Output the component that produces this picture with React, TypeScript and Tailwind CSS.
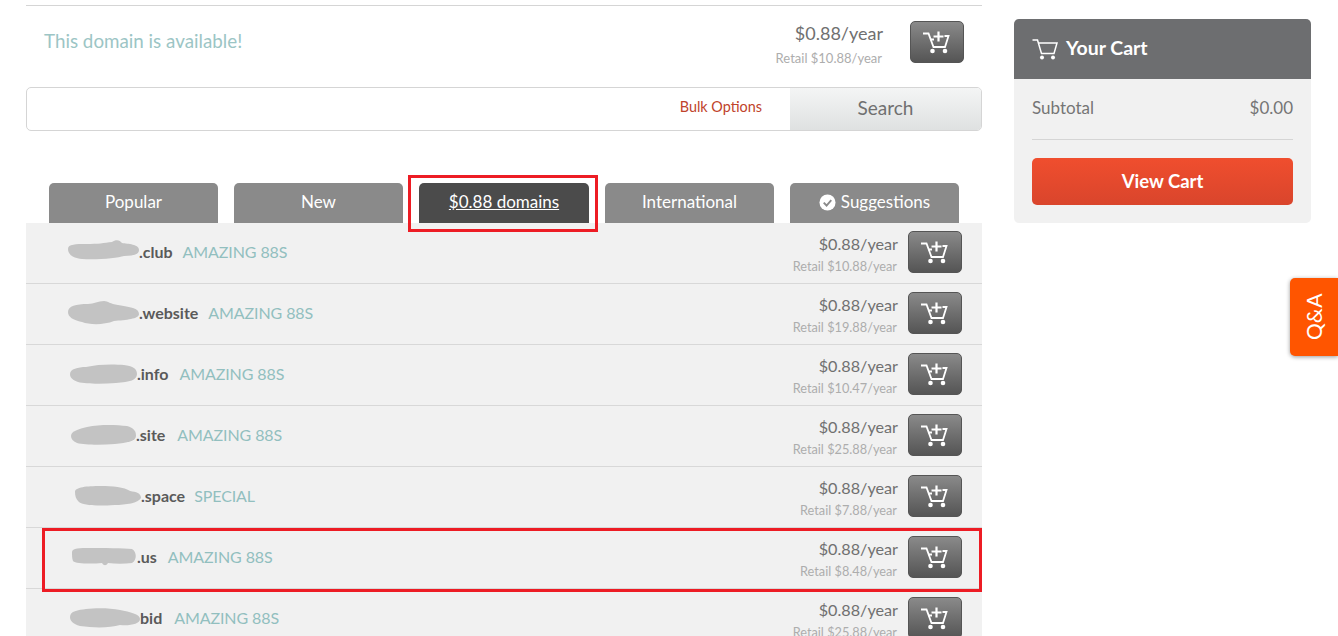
const font = "font-['Lato','Noto_Sans',sans-serif]";

function CartPlus() {
  return (
    <svg viewBox="0 0 54 42" className="w-[54px] h-[42px] block" fill="none" stroke="#fff">
      <path d="M13 12.5h5.5l5 13.5h11.5l3.5-11h-4" strokeWidth="1.8" />
      <path d="M20.5 18.5h3.5" strokeWidth="1.8" />
      <path d="M28.5 10.5v10M23.5 15.5h10" strokeWidth="2.2" />
      <circle cx="22.5" cy="30" r="2.3" fill="#fff" stroke="none" />
      <circle cx="35" cy="30" r="2.3" fill="#fff" stroke="none" />
    </svg>
  );
}

function AddButton() {
  return (
    <div className="w-[54px] h-[42px] shrink-0 rounded-[5px] border border-[#555] bg-gradient-to-b from-[#8a8a8a] to-[#555555] flex items-center justify-center overflow-hidden">
      <div className="shrink-0">
        <CartPlus />
      </div>
    </div>
  );
}

type Row = {
  tld: string;
  tag: string;
  retail: string;
  blobBox: string;
  view: string;
  blob: string;
  tagGap: string;
};

const rows: Row[] = [
  { tld: ".club", tag: "AMAZING 88S", retail: "Retail $10.88/year", blobBox: "ml-[42px] w-[71px] h-[20px] -mt-[3px]", view: "0 0 71 20", tagGap: "ml-[10px]", blob: "M0 9C0 4 8 4 18 4C30 4 36 3 44 2C48 -1 52 0 54 3C60 4 71 4 71 10C71 14 66 16 56 16C50 18 30 20 14 19C4 18 0 14 0 9Z" },
  { tld: ".website", tag: "AMAZING 88S", retail: "Retail $19.88/year", blobBox: "ml-[42px] w-[71px] h-[24px]", view: "0 0 71 24", tagGap: "ml-[10px]", blob: "M0 11C0 5 8 3 20 3C26 3 30 0 36 0C40 0 42 3 50 4C62 6 71 7 71 13C71 18 58 19 46 20C36 24 22 24 14 21C5 19 0 16 0 11Z" },
  { tld: ".info", tag: "AMAZING 88S", retail: "Retail $10.47/year", blobBox: "ml-[44px] w-[67px] h-[20px]", view: "0 0 67 20", tagGap: "ml-[11px]", blob: "M0 10C0 5 8 3 16 3C28 0 44 0 54 1C62 2 67 4 67 10C67 16 60 18 46 19C32 20 16 20 8 18C3 16 0 14 0 10Z" },
  { tld: ".site", tag: "AMAZING 88S", retail: "Retail $25.88/year", blobBox: "ml-[45px] w-[65px] h-[20px]", view: "0 0 65 20", tagGap: "ml-[12px]", blob: "M0 11C0 6 8 4 16 2C30 -1 46 0 56 1C63 3 65 6 65 11C65 16 56 18 44 19C30 20 14 20 6 18C2 16 0 14 0 11Z" },
  { tld: ".space", tag: "SPECIAL", retail: "Retail $7.88/year", blobBox: "ml-[49px] w-[66px] h-[20px]", view: "0 0 67 20", tagGap: "ml-[9px]", blob: "M0 6C0 1 12 0 26 0C38 0 50 1 56 5C62 6 67 7 67 12C64 17 52 19 40 19C26 20 10 20 4 16C1 13 0 10 0 6Z" },
  { tld: ".us", tag: "AMAZING 88S", retail: "Retail $8.48/year", blobBox: "ml-[46px] w-[65px] h-[18px]", view: "0 0 65 18", tagGap: "ml-[11px]", blob: "M0 4C0 0 8 0 18 0C30 0 52 0 60 1C65 4 65 12 60 15C52 16 44 16 36 15C34 18 32 18 30 15C20 16 4 16 1 13C0 10 0 8 0 4Z" },
  { tld: "bid", tag: "AMAZING 88S", retail: "Retail $25.88/year", blobBox: "ml-[44px] w-[70px] h-[20px]", view: "0 0 70 20", tagGap: "ml-[12px]", blob: "M0 9C0 3 8 2 16 1C26 0 40 0 50 2C60 4 70 6 70 11C70 16 60 18 50 17C40 20 24 20 10 18C3 16 0 13 0 9Z" },
];

function DomainRow({ row }: { row: Row }) {
  return (
    <div className="h-[61px] border-b border-[#d8d8d8] flex items-center pr-[20px] pb-[3px]">
      <svg viewBox={row.view} preserveAspectRatio="none" className={`${row.blobBox} shrink-0`}>
        <path d={row.blob} fill="#c3c3c3" />
      </svg>
      <span className="text-[16px] font-bold text-[#5a5a5a]">{row.tld}</span>
      <span className={`${row.tagGap} text-[16px] tracking-[-0.1px] text-[#92bfbf]`}>{row.tag}</span>
      <div className="ml-auto mr-[10px] text-right pt-[7px]">
        <div className="text-[16.2px] leading-[23px] text-[#707070]">$0.88/year</div>
        <div className="text-[12.75px] leading-[23px] pr-[1px] text-[#adadad]">{row.retail}</div>
      </div>
      <AddButton />
    </div>
  );
}

function Tab({ label, active, check }: { label: string; active?: boolean; check?: boolean }) {
  return (
    <div className={`h-[40px] rounded-t-[5px] pb-[2px] flex items-center justify-center gap-[5px] text-[17px] text-white ${active ? "w-[170px] bg-[#4b4b4b] underline" : "w-[169px] bg-[#8a8a8a]"}`}>
      {check && (
        <svg viewBox="0 0 18 18" className="w-[17px] h-[17px]">
          <circle cx="9" cy="9" r="8.5" fill="#fff" />
          <path d="M5 9.2l3 3 5-5.6" stroke="#8a8a8a" strokeWidth="2" fill="none" />
        </svg>
      )}
      {label}
    </div>
  );
}

export default function App() {
  return (
    <div className={`${font} relative h-[636px] w-[1338px] overflow-hidden bg-white flex`}>
      <div className="w-[956px] ml-[26px] pt-[5px] shrink-0">
        <div className="h-[82px] border-t border-[#d5d5d5] flex items-start pl-[18px] pr-[18px]">
          <span className="mt-[21px] text-[18.8px] leading-[28px] text-[#9cc5c5]">This domain is available!</span>
          <div className="ml-auto mr-[27px] mt-[14px] text-right">
            <div className="text-[18px] leading-[26px] text-[#707070]">$0.88/year</div>
            <div className="text-[13px] leading-[24px] pr-[1px] text-[#adadad]">Retail $10.88/year</div>
          </div>
          <div className="mt-[15px]">
            <AddButton />
          </div>
        </div>

        <div className="h-[44px] border border-[#d5d5d5] rounded-[5px] flex items-stretch overflow-hidden">
          <div className="flex-1 flex items-center justify-end pr-[28px] pb-[4px] text-[14.4px] text-[#c0432b]">Bulk Options</div>
          <div className="w-[191px] bg-gradient-to-b from-[#f4f5f5] to-[#dfe1e1] pb-[2px] flex items-center justify-center text-[19px] text-[#707070]">Search</div>
        </div>

        <div className="mt-[52px] pl-[23px] flex gap-[16px]">
          <Tab label="Popular" />
          <Tab label="New" />
          <Tab label="$0.88 domains" active />
          <Tab label="International" />
          <Tab label="Suggestions" check />
        </div>

        <div className="bg-[#f1f1f1]">
          {rows.map((r) => (
            <DomainRow key={r.tld} row={r} />
          ))}
        </div>
      </div>

      <div className="ml-[32px] mt-[19px] w-[297px] h-[204px] rounded-[5px] bg-[#f1f1f1] overflow-hidden shrink-0">
        <div className="h-[60px] bg-[#6d6e70] flex items-center pl-[18px] pb-[2px] gap-[7px] text-[19.5px] font-bold text-white">
          <svg viewBox="0 0 27 22" className="w-[27px] h-[22px] mt-[2px]" fill="none" stroke="#fff">
            <path d="M0.5 2h5l4 13.5h12.5l3-10.5H6.5" strokeWidth="1.5" />
            <circle cx="10" cy="19.5" r="2" fill="#fff" stroke="none" />
            <circle cx="21" cy="19.5" r="2" fill="#fff" stroke="none" />
          </svg>
          Your Cart
        </div>
        <div className="px-[18px]">
          <div className="h-[61px] border-b border-[#d5d5d5] flex justify-between items-start pt-[17px] text-[17px] leading-[24px] text-[#757575]">
            <span>Subtotal</span>
            <span>$0.00</span>
          </div>
          <div className="mt-[18px] h-[47px] rounded-[5px] bg-gradient-to-b from-[#f04e2e] to-[#d9452c] flex items-center justify-center text-[18.5px] font-bold text-white">View Cart</div>
        </div>
      </div>

      <div className="absolute left-[1290px] top-[278px] w-[48px] h-[78px] rounded-l-[5px] bg-[#ff5500] shadow-[0_1px_4px_rgba(0,0,0,0.4)] flex items-center justify-center">
        <span className="-rotate-90 text-[21px] text-white whitespace-nowrap">Q&amp;A</span>
      </div>

      <div className="absolute left-[408px] top-[175px] w-[190px] h-[57px] border-[3px] border-[#ed1c24]" />
      <div className="absolute left-[42px] top-[528px] w-[940px] h-[64px] border-[3px] border-[#ed1c24]" />
    </div>
  );
}
